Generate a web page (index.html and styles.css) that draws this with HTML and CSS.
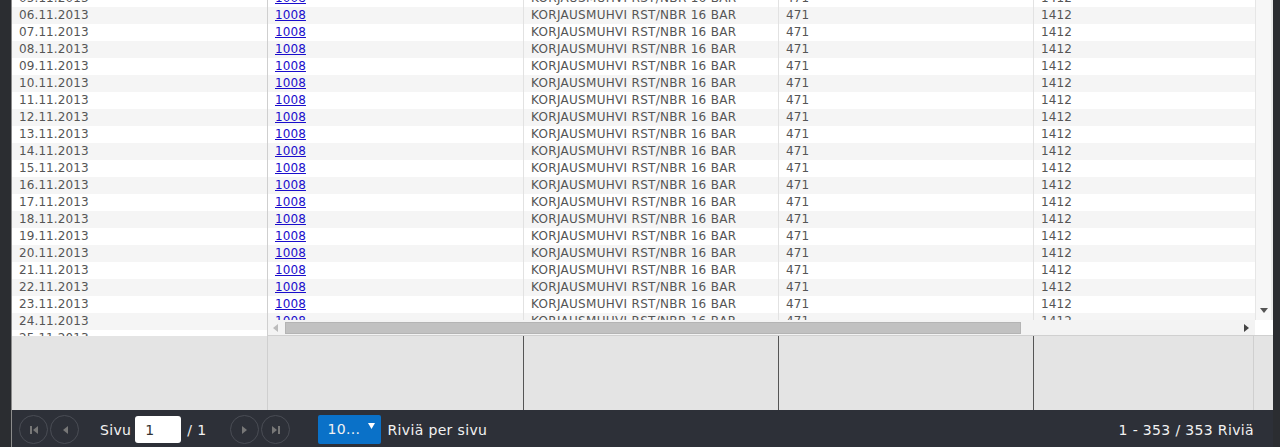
FILE: index.html
```html
<!DOCTYPE html>
<html lang="fi">
    <head>
        <meta charset="UTF-8" />
        <title>Kulutus</title>
        <link rel="stylesheet" href="styles.css">
    </head>

    <body>
        <div class="grid">
            <div class="content">
                <div class="frozen">
                    <div class="rows">
                        <div class="row"><span class="cell date">05.11.2013</span></div>
                        <div class="row alt"><span class="cell date">06.11.2013</span></div>
                        <div class="row"><span class="cell date">07.11.2013</span></div>
                        <div class="row alt"><span class="cell date">08.11.2013</span></div>
                        <div class="row"><span class="cell date">09.11.2013</span></div>
                        <div class="row alt"><span class="cell date">10.11.2013</span></div>
                        <div class="row"><span class="cell date">11.11.2013</span></div>
                        <div class="row alt"><span class="cell date">12.11.2013</span></div>
                        <div class="row"><span class="cell date">13.11.2013</span></div>
                        <div class="row alt"><span class="cell date">14.11.2013</span></div>
                        <div class="row"><span class="cell date">15.11.2013</span></div>
                        <div class="row alt"><span class="cell date">16.11.2013</span></div>
                        <div class="row"><span class="cell date">17.11.2013</span></div>
                        <div class="row alt"><span class="cell date">18.11.2013</span></div>
                        <div class="row"><span class="cell date">19.11.2013</span></div>
                        <div class="row alt"><span class="cell date">20.11.2013</span></div>
                        <div class="row"><span class="cell date">21.11.2013</span></div>
                        <div class="row alt"><span class="cell date">22.11.2013</span></div>
                        <div class="row"><span class="cell date">23.11.2013</span></div>
                        <div class="row alt"><span class="cell date">24.11.2013</span></div>
                        <div class="row"><span class="cell date">25.11.2013</span></div>
                    </div>
                </div>

                <div class="pane">
                    <div class="pane-body">
                        <div class="clip">
                            <div class="rows" id="data-rows"></div>
                        </div>
                        <div class="vscroll">
                            <svg class="arrow-down" width="8" height="5" viewBox="0 0 8 5"><path d="M0 0h8L4 5z" fill="#555"/></svg>
                        </div>
                    </div>
                    <div class="hbar">
                        <div class="hscroll">
                            <svg class="harrow" width="5" height="8" viewBox="0 0 5 8"><path d="M5 0v8L0 4z" fill="#bbb"/></svg>
                            <div class="thumb"></div>
                            <svg class="harrow right" width="5" height="8" viewBox="0 0 5 8"><path d="M0 0v8l5-4z" fill="#444"/></svg>
                        </div>
                        <div class="corner"></div>
                    </div>
                </div>
            </div>

            <div class="footer-row">
                <div class="fcell first"></div>
                <div class="fcell dark wide"></div>
                <div class="fcell dark"></div>
                <div class="fcell dark"></div>
                <div class="fcell last"></div>
            </div>

            <div class="pager">
                <button class="nav">
                    <svg width="8" height="8" viewBox="0 0 8 8"><path d="M0 0h2v8H0zM8 0v8L3 4z" fill="#777"/></svg>
                </button>
                <button class="nav">
                    <svg width="8" height="8" viewBox="0 0 8 8"><path d="M7 0v8L2 4z" fill="#777"/></svg>
                </button>
                <span class="label sivu">Sivu</span>
                <input class="page-input" value="1" />
                <span class="label">/ 1</span>
                <button class="nav next">
                    <svg width="8" height="8" viewBox="0 0 8 8"><path d="M1 0v8l5-4z" fill="#777"/></svg>
                </button>
                <button class="nav">
                    <svg width="8" height="8" viewBox="0 0 8 8"><path d="M0 0v8l5-4zM6 0h2v8H6z" fill="#777"/></svg>
                </button>
                <div class="size-select">
                    <span>10...</span>
                    <svg width="7" height="6" viewBox="0 0 7 6"><path d="M0 0h7L3.5 6z" fill="#fff"/></svg>
                </div>
                <span class="label">Riviä per sivu</span>
                <span class="label info">1 - 353 / 353 Riviä</span>
            </div>
        </div>

        <script>
            const rows = document.getElementById("data-rows");
            for (let i = 0; i < 21; i++) {
                const row = document.createElement("div");
                row.className = i % 2 ? "row alt" : "row";
                row.innerHTML =
                    '<span class="cell c1"><a href="#">1008</a></span>' +
                    '<span class="cell c2">KORJAUSMUHVI RST/NBR 16 BAR</span>' +
                    '<span class="cell c3">471</span>' +
                    '<span class="cell c4">1412</span>';
                rows.appendChild(row);
            }
        </script>
    </body>
</html>
```

FILE: styles.css
```css
* {
    margin: 0;
    padding: 0;
    box-sizing: border-box;
}

html {
    font-family: "DejaVu Sans", Verdana, sans-serif;
}

body {
    background: #2b2d31;
    height: 447px;
    overflow: hidden;
}

.grid {
    margin-left: 11px;
    width: 1262px;
    height: 447px;
    display: flex;
    flex-direction: column;
    background: #fff;
    border-left: 1px solid #8c8c8c;
}

.content {
    display: flex;
    height: 336px;
}

.frozen {
    width: 256px;
    flex: none;
    overflow: hidden;
    border-right: 1px solid #cfcfcf;
}

.rows {
    margin-top: -10px;
}

.row {
    display: flex;
    height: 17px;
    line-height: 17px;
    font-size: 12px;
    letter-spacing: 0.1px;
    color: #555;
    background: #fff;
    white-space: nowrap;
}

.row.alt {
    background: #f5f5f5;
}

.cell {
    flex: none;
    padding-left: 7px;
    overflow: hidden;
}

.cell a {
    color: #1a0dcc;
}

.date {
    width: 255px;
}

.c1 {
    width: 256px;
    border-right: 1px solid #e2e2e2;
}

.c2,
.c3 {
    width: 255px;
    border-right: 1px solid #e2e2e2;
}

.c2 {
    letter-spacing: 0.3px;
}

.c4 {
    width: 255px;
}

.pane {
    flex: 1;
    display: flex;
    flex-direction: column;
    overflow: hidden;
}

.pane-body {
    display: flex;
    height: 320px;
}

.clip {
    flex: 1;
    overflow: hidden;
}

.vscroll {
    width: 18px;
    flex: none;
    background: #f7f7f7;
    border-left: 1px solid #e6e6e6;
    border-right: 2px solid #e9e9e9;
    display: flex;
    flex-direction: column;
    justify-content: flex-end;
    align-items: center;
    padding-bottom: 7px;
}

.hbar {
    display: flex;
    height: 16px;
    border-bottom: 1px solid #d0d0d0;
}

.hscroll {
    flex: 1;
    background: #f3f3f3;
    display: flex;
    align-items: center;
    padding: 0 6px 0 5px;
}

.harrow {
    flex: none;
}

.thumb {
    width: 736px;
    height: 12px;
    margin-left: 7px;
    background: #c1c1c1;
    border: 1px solid #b4b4b4;
}

.harrow.right {
    margin-left: auto;
}

.corner {
    width: 18px;
    background: #fff;
}

.footer-row {
    display: flex;
    height: 74px;
    background: #e4e4e4;
}

.fcell {
    width: 256px;
    border-right: 1px solid #cfcfcf;
}

.fcell.dark {
    width: 255px;
    border-right: 1px solid #555;
}

.fcell.dark.wide {
    width: 256px;
}

.fcell.last {
    width: 220px;
    border-right: 1px solid #cfcfcf;
}

.pager {
    height: 37px;
    background: #2d3038;
    display: flex;
    align-items: center;
    padding-left: 7px;
    padding-right: 19px;
    padding-top: 2px;
    color: #f2f2f2;
    font-size: 14px;
    letter-spacing: 0.35px;
}

.nav {
    width: 29px;
    height: 29px;
    border-radius: 50%;
    border: 1px solid #4a4d55;
    background: transparent;
    display: flex;
    align-items: center;
    justify-content: center;
    margin-right: 2px;
}

.nav.next {
    margin-left: 24px;
}

.label {
    white-space: nowrap;
}

.sivu {
    margin-left: 19px;
    margin-right: 4px;
}

.page-input {
    width: 46px;
    height: 27px;
    border: none;
    border-radius: 3px;
    padding-left: 10px;
    font-family: inherit;
    font-size: 14px;
    color: #333;
    margin-right: 6px;
}

.size-select {
    width: 63px;
    height: 29px;
    margin-left: 26px;
    margin-right: 6px;
    background: #0a71c8;
    border-radius: 2px;
    display: flex;
    align-items: flex-start;
    padding: 6px 0 0 9px;
    gap: 8px;
}

.size-select svg {
    margin-top: 2px;
}

.info {
    margin-left: auto;
}
```
